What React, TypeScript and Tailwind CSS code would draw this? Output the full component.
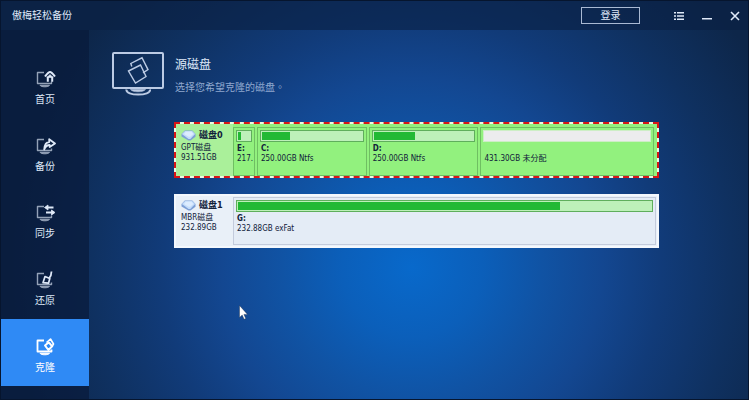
import { useState } from "react";
import type { ReactNode } from "react";

type Partition = {
  name: string;
  size: string;
  weight: number;
  used: number | null;
};

type Disk = {
  id: string;
  name: string;
  kind: string;
  size: string;
  partitions: Partition[];
};

const disks: Disk[] = [
  {
    id: "disk0",
    name: "磁盘0",
    kind: "GPT磁盘",
    size: "931.51GB",
    partitions: [
      { name: "E:", size: "217.", weight: 16, used: 22 },
      { name: "C:", size: "250.00GB Ntfs", weight: 104, used: 28 },
      { name: "D:", size: "250.00GB Ntfs", weight: 104, used: 41 },
      { name: "", size: "431.30GB 未分配", weight: 168, used: null },
    ],
  },
  {
    id: "disk1",
    name: "磁盘1",
    kind: "MBR磁盘",
    size: "232.89GB",
    partitions: [
      { name: "G:", size: "232.88GB exFat", weight: 1, used: 78 },
    ],
  },
];

const navItems = [
  {
    id: "home",
    label: "首页",
    badge: (
      <>
        <path d="M9 6.500C11 4 12.500 2 14 2s3 2 5 4.500" strokeWidth="2" />
        <path d="M11.800 6.500v5.300M16.200 6.500v5.300" strokeWidth="2" />
        <path d="M11 7.500 14 4.500l3 3z" fill="currentColor" strokeWidth=".6" />
      </>
    ),
  },
  {
    id: "backup",
    label: "备份",
    badge: (
      <path
        d="M8.200 12.500c.3-4.500 2.200-7.200 5-7.500V2.200l5.800 4.300-5.300 3.500V8c-2.500 0-4.300 1.500-5.500 4.500z"
        strokeWidth="1.800"
      />
    ),
  },
  {
    id: "sync",
    label: "同步",
    badge: (
      <>
        <path d="M10 3.500h7.500M18 8.500h-8" strokeWidth="2" />
        <path
          d="M12 1 8.500 3.500 12 6zM15.500 6l3.500 2.500-3.500 2.500z"
          fill="currentColor"
          strokeWidth=".8"
        />
      </>
    ),
  },
  {
    id: "restore",
    label: "还原",
    badge: (
      <>
        <path d="M15.500.500c0 3-.8 5-2.500 7" strokeWidth="1.800" />
        <path d="m9 5.500 4.800 2-1.300 4.700-5.500-.5z" strokeWidth="1.700" />
      </>
    ),
  },
  {
    id: "clone",
    label: "克隆",
    badge: (
      <>
        <path d="m10.500 4.500 4-3.500 3 5-1.200 2" strokeWidth="1.600" />
        <path d="m9 7.500 3.800-3.200 3.400 4-3.800 3.700z" strokeWidth="2" />
      </>
    ),
  },
];

const NavIcon = ({ children, active }: { children: ReactNode; active: boolean }) => (
  <svg
    viewBox="0 0 20 18"
    className="ml-[2px] h-[18px] w-5"
    fill="none"
    stroke="currentColor"
    strokeLinejoin="round"
  >
    <g opacity={active ? 1 : 0.65} strokeWidth={active ? 1.8 : 1.4}>
      <path d="M8 2.500H1.500v11h14V11.500" />
      <path d="M4 15.300h9.500c-1 2-8.500 2-9.500 0z" fill="currentColor" strokeWidth="1" />
    </g>
    {children}
  </svg>
);

const MonitorIcon = () => (
  <svg viewBox="0 0 52 44" className="h-11 w-[52px] shrink-0" fill="none" stroke="#bccbe4">
    <rect x="1" y="1" width="50" height="35" rx="1" strokeWidth="2" />
    <path d="M19.800 14.500 18.800 11.500 30 5.800l6 11.800-5 3.200" strokeWidth="1.400" />
    <path d="m16.500 19 12-6 5.500 11.500-10.500 6.500z" strokeWidth="1.400" />
    <path d="M14.500 37.500c-1.500 6.800 25 6.800 23.500 0" strokeWidth="2" />
    <path d="M18.500 37.500c2 3 13 3 15 0z" fill="#bccbe4" strokeWidth=".6" />
  </svg>
);

const DriveIcon = () => (
  <svg viewBox="0 0 15 11" className="h-[11px] w-[15px]">
    <path d="M.5 4 3.800.5h7.500L14.500 4v2.800l-5 3.700H7.500L.5 6.500z" fill="#7d9fd6" />
    <path d="M.9 4 4 .9h7.200L14.100 4l-4.800 5H7.500z" fill="#c3dcfa" />
    <path d="M3 3.900 4.800 1.800h5.600l2 2.100-3.200 2.800H7.500z" fill="#dcecff" />
  </svg>
);

const PartitionBox = ({ partition, selected }: { partition: Partition; selected: boolean }) => (
  <span
    className={`flex min-w-0 basis-0 flex-col overflow-hidden border px-[2px] pt-[2px] ${
      selected ? "border-[#6fbf62] bg-[#92f17e]" : "border-[#c3cbdc] bg-[#e4ecf6]"
    }`}
    style={{ flexGrow: partition.weight }}
  >
    {partition.used === null ? (
      <span className="h-3 border border-[#cdeec6] bg-[#ececee]" />
    ) : (
      <span className="flex h-3 border border-[#5fae5c] bg-[#bdf0b9] p-px">
        <span className="bg-[#22b934]" style={{ width: `${partition.used}%` }} />
      </span>
    )}
    <span className="mt-[2px] h-[10px] px-px font-bold leading-[10px]">{partition.name}</span>
    <span className="h-[10px] whitespace-nowrap px-px leading-[10px]">{partition.size}</span>
  </span>
);

const DiskRow = ({
  disk,
  selected,
  onSelect,
}: {
  disk: Disk;
  selected: boolean;
  onSelect: () => void;
}) => (
  <button
    type="button"
    aria-pressed={selected}
    onClick={onSelect}
    className={`block w-full border-2 text-left text-[8px] text-[#10203a] ${
      selected ? "border-dashed border-[#d81616] bg-[#e9fbe2]" : "border-[#f4f8fd]"
    }`}
  >
    <span className={`flex ${selected ? "bg-[#92f17e]" : "bg-[#e9f0f8]"}`}>
      <span
        className={`flex w-[57px] shrink-0 flex-col pl-[5px] ${
          selected ? "bg-[#aaf09a] pt-[5px]" : "pt-[3px]"
        }`}
      >
        <span className="flex h-3 items-center gap-[3px] text-[9px] font-bold leading-3">
          <DriveIcon />
          {disk.name}
        </span>
        <span className="mt-[2px] leading-[10px]">{disk.kind}</span>
        <span className="leading-[10px]">{disk.size}</span>
      </span>
      <span
        className={`flex h-[50px] min-w-0 grow gap-[2px] pt-px ${
          selected ? "mt-[2px] pr-[3px]" : "pb-px pr-px"
        }`}
      >
        {disk.partitions.map((partition) => (
          <PartitionBox
            key={partition.name + partition.size}
            partition={partition}
            selected={selected}
          />
        ))}
      </span>
    </span>
  </button>
);

const App = () => {
  const [page, setPage] = useState("clone");
  const [source, setSource] = useState("disk0");

  return (
    <div className="relative flex min-h-screen flex-col border border-[#06152e] bg-[radial-gradient(circle_at_55%_67%,#0869cb_0px,#0b5fba_70px,#1053a4_130px,#134791_190px,#113b79_250px,#0f3161_320px,#0d2649_400px)] font-['DejaVu_Sans_Condensed','Noto_Sans_CJK_SC',sans-serif] text-[#dfe9f8]">
      <header className="flex h-[29px] items-center bg-[#0a1f42]/60 pl-[11px] pr-2">
        <h1 className="grow text-[10px]">傲梅轻松备份</h1>
        <button
          type="button"
          className="mr-[34px] h-[17px] w-[59px] border border-[#a9b9d3] text-[10px] leading-[15px]"
        >
          登录
        </button>
        <div className="flex items-center gap-[18px]">
          <button type="button" aria-label="菜单">
            <svg viewBox="0 0 10 10" className="size-[10px]" fill="currentColor">
              <path d="M0 1h2v1.500H0zM3 1h7v1.500H3zM0 4.300h2v1.500H0zM3 4.300h7v1.500H3zM0 7.500h2V9H0zM3 7.500h7V9H3z" />
            </svg>
          </button>
          <button type="button" aria-label="最小化">
            <svg viewBox="0 0 10 10" className="size-[10px]" fill="currentColor">
              <path d="M0 7h10v1.500H0z" />
            </svg>
          </button>
          <button type="button" aria-label="关闭">
            <svg viewBox="0 0 10 10" className="size-[10px]" stroke="currentColor" strokeWidth="1.600">
              <path d="m1 1 8 8M9 1 1 9" />
            </svg>
          </button>
        </div>
      </header>

      <div className="flex grow">
        <nav className="flex w-[88px] shrink-0 flex-col bg-[#08193a]/70 pt-[21px]">
          {navItems.map((item) => (
            <button
              key={item.id}
              type="button"
              onClick={() => setPage(item.id)}
              className={`flex h-[67px] flex-col items-center gap-1 pt-[19px] text-[10px] leading-4 ${
                page === item.id ? "bg-[#2f8af5] text-white" : ""
              }`}
            >
              <NavIcon active={page === item.id}>{item.badge}</NavIcon>
              {item.label}
            </button>
          ))}
        </nav>

        <main className="min-w-0 grow pt-[22px]">
          <div className="flex gap-[11px] pl-[23px]">
            <MonitorIcon />
            <div className="pt-1">
              <h2 className="text-[12px] leading-[18px]">源磁盘</h2>
              <p className="mt-[5px] h-4 text-[10px] leading-4 text-[#8fa8cf]">
                选择您希望克隆的磁盘
                <span className="font-['Noto_Sans_CJK_TC',sans-serif]">。</span>
              </p>
            </div>
          </div>
          <div className="ml-[85px] mr-[89px] mt-[26px] flex flex-col gap-4">
            {disks.map((disk) => (
              <DiskRow
                key={disk.id}
                disk={disk}
                selected={source === disk.id}
                onSelect={() => setSource(disk.id)}
              />
            ))}
          </div>
        </main>
      </div>

      <svg
        viewBox="0 0 9 15"
        className="pointer-events-none absolute left-[238px] top-[304px] h-[15px] w-[9px]"
      >
        <path
          d="M.5.500v12l2.700-2.400 1.900 4.200 1.700-.8-1.900-4.100H8.500z"
          fill="#fff"
          stroke="#1b2a44"
          strokeWidth=".4"
        />
      </svg>
    </div>
  );
};

export default App;
